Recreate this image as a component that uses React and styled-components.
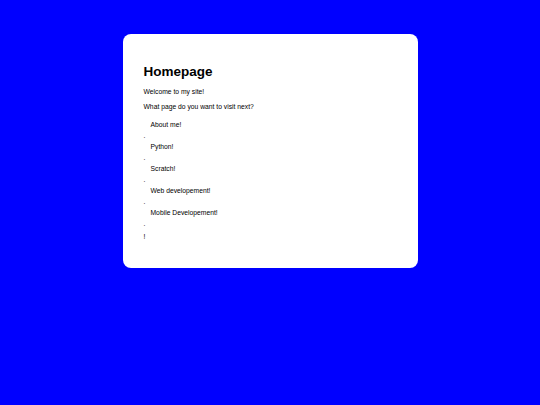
import React from "react";
import styled, { createGlobalStyle } from "styled-components";

const GlobalStyle = createGlobalStyle`
  html, body {
    margin: 0;
    padding: 0;
    background-color: #0000ff;
    font-family: "Liberation Sans", Arial, sans-serif;
    -webkit-font-smoothing: antialiased;
  }
`;

const Page = styled.div`
  width: 540px;
  height: 405px;
  padding-top: 34px;
  box-sizing: border-box;
  display: flex;
  justify-content: center;
  align-items: flex-start;
`;

const Card = styled.div`
  width: 295px;
  height: 234px;
  box-sizing: border-box;
  background-color: #fff;
  border-radius: 8px;
  padding: 30px 21px 28px;
  color: #000;
`;

const Title = styled.h1`
  font-size: 13.5px;
  line-height: 16px;
  font-weight: bold;
  margin: 0 0 8px;
`;

const Text = styled.p`
  font-size: 6.75px;
  line-height: 8px;
  margin: 0 0 ${(p) => (p.$last ? "10px" : "7px")};
`;

const List = styled.div`
  display: flex;
  flex-direction: column;
  gap: 3px;
  font-size: 6.75px;
  line-height: 8px;
`;

const Item = styled.a`
  display: block;
  padding-left: 7px;
  color: #000;
  text-decoration: none;
`;

const Dot = styled.span`
  display: block;
`;

const Bang = styled.div`
  font-size: 6.75px;
  line-height: 8px;
  margin-top: 5px;
`;

const pages = [
  "About me!",
  "Python!",
  "Scratch!",
  "Web developement!",
  "Mobile Developement!",
];

const App = () => {
  return (
    <>
      <GlobalStyle />
      <Page>
        <Card>
          <Title>Homepage</Title>
          <Text>Welcome to my site!</Text>
          <Text $last>What page do you want to visit next?</Text>
          <List>
            {pages.map((name) => (
              <React.Fragment key={name}>
                <Item href="#">{name}</Item>
                <Dot>.</Dot>
              </React.Fragment>
            ))}
          </List>
          <Bang>!</Bang>
        </Card>
      </Page>
    </>
  );
};

export default App;
